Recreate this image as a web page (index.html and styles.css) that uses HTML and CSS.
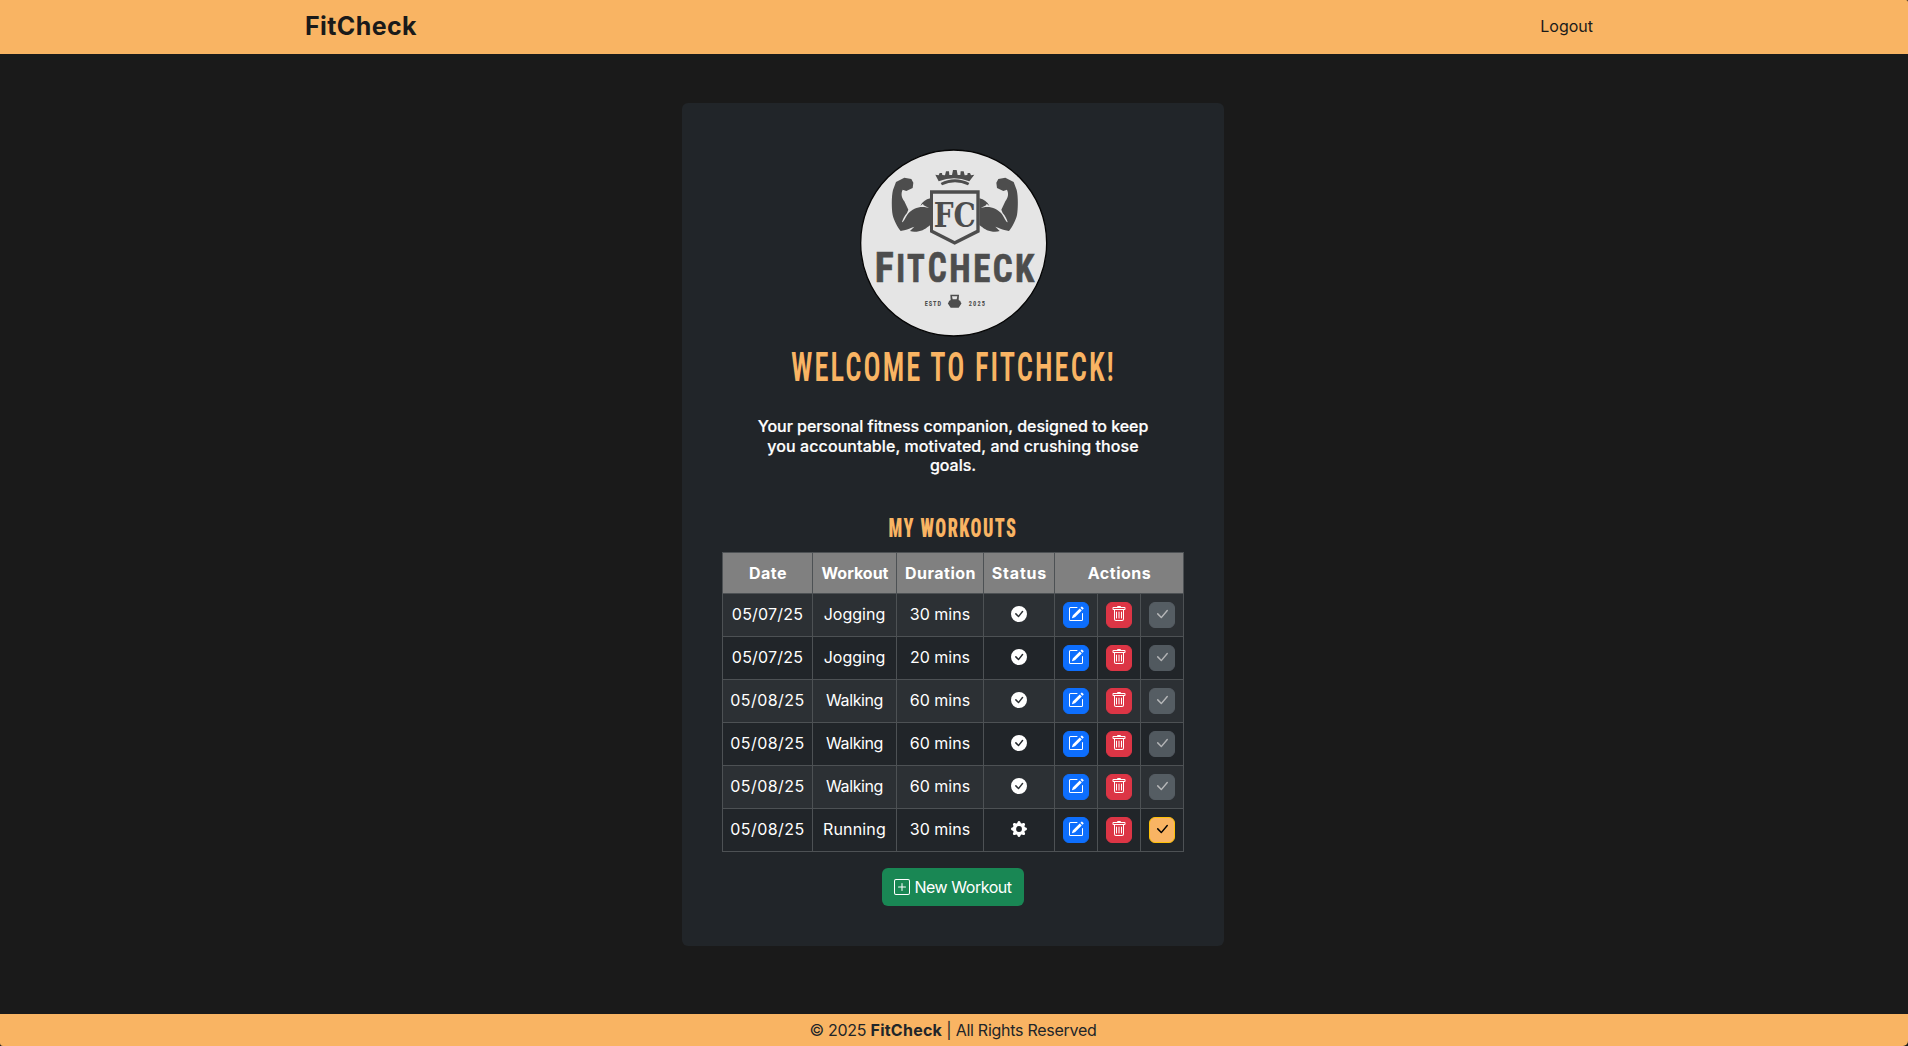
FILE: index.html
```
<!DOCTYPE html>
<html lang="en">
<head>
<meta charset="utf-8">
<title>FitCheck</title>
<link rel="stylesheet" href="styles.css">
</head>
<body>
<svg class="sprite" aria-hidden="true">
  <symbol id="pencil" viewBox="0 0 16 16"><path d="M15.502 1.94a.5.5 0 0 1 0 .706L14.459 3.69l-2-2L13.502.646a.5.5 0 0 1 .707 0l1.293 1.293zm-1.75 2.456-2-2L4.939 9.21a.5.5 0 0 0-.121.196l-.805 2.414a.25.25 0 0 0 .316.316l2.414-.805a.5.5 0 0 0 .196-.12z"/><path fill-rule="evenodd" d="M1 13.5A1.5 1.5 0 0 0 2.5 15h11a1.5 1.5 0 0 0 1.5-1.5v-6a.5.5 0 0 0-1 0v6a.5.5 0 0 1-.5.5h-11a.5.5 0 0 1-.5-.5v-11a.5.5 0 0 1 .5-.5H9a.5.5 0 0 0 0-1H2.5A1.5 1.5 0 0 0 1 2.500z"/></symbol>
  <symbol id="trash" viewBox="0 0 16 16"><path d="M5.5 5.5A.5.5 0 0 1 6 6v6a.5.5 0 0 1-1 0V6a.5.5 0 0 1 .5-.5m2.500 0a.5.5 0 0 1 .5.5v6a.5.5 0 0 1-1 0V6a.5.5 0 0 1 .5-.5m3 .5a.5.5 0 0 0-1 0v6a.5.5 0 0 0 1 0z"/><path d="M14.500 3a1 1 0 0 1-1 1H13v9a2 2 0 0 1-2 2H5a2 2 0 0 1-2-2V4h-.5a1 1 0 0 1-1-1V2a1 1 0 0 1 1-1H6a1 1 0 0 1 1-1h2a1 1 0 0 1 1 1h3.500a1 1 0 0 1 1 1zM4.118 4 4 4.059V13a1 1 0 0 0 1 1h6a1 1 0 0 0 1-1V4.059L11.882 4zM2.500 3h11V2h-11z"/></symbol>
  <symbol id="check" viewBox="0 0 16 16"><path d="M12.736 3.970a.733.733 0 0 1 1.047 0c.286.289.290.756.010 1.050L7.880 12.010a.733.733 0 0 1-1.065.020L3.217 8.384a.757.757 0 0 1 0-1.060.733.733 0 0 1 1.047 0l3.052 3.093 5.400-6.425z"/></symbol>
  <symbol id="done" viewBox="0 0 16 16"><path fill-rule="evenodd" d="M16 8A8 8 0 1 1 0 8a8 8 0 0 1 16 0m-5.030-3.030-3.493 4.447-2.094-2.093a.75.75 0 0 0-1.060 1.060L6.970 11.030a.75.75 0 0 0 1.079-.020l3.992-4.990a.75.75 0 0 0-1.071-1.050"/></symbol>
  <symbol id="gear" viewBox="0 0 16 16"><path d="M9.405 1.050c-.413-1.400-2.397-1.400-2.810 0l-.1.340a1.464 1.464 0 0 1-2.105.872l-.310-.170c-1.283-.698-2.686.705-1.987 1.987l.169.311c.446.820.023 1.841-.872 2.105l-.340.100c-1.400.413-1.400 2.397 0 2.810l.340.100a1.464 1.464 0 0 1 .872 2.105l-.170.310c-.698 1.283.705 2.686 1.987 1.987l.311-.169a1.464 1.464 0 0 1 2.105.872l.100.340c.413 1.400 2.397 1.400 2.810 0l.100-.340a1.464 1.464 0 0 1 2.105-.872l.310.170c1.283.698 2.686-.705 1.987-1.987l-.169-.311a1.464 1.464 0 0 1 .872-2.105l.340-.100c1.400-.413 1.400-2.397 0-2.810l-.340-.100a1.464 1.464 0 0 1-.872-2.105l.170-.310c.698-1.283-.705-2.686-1.987-1.987l-.311.169a1.464 1.464 0 0 1-2.105-.872zM8 10.930a2.929 2.929 0 1 1 0-5.860 2.929 2.929 0 0 1 0 5.858z"/></symbol>
  <symbol id="plus" viewBox="0 0 16 16"><path d="M14 1a1 1 0 0 1 1 1v12a1 1 0 0 1-1 1H2a1 1 0 0 1-1-1V2a1 1 0 0 1 1-1zM2 0a2 2 0 0 0-2 2v12a2 2 0 0 0 2 2h12a2 2 0 0 0 2-2V2a2 2 0 0 0-2-2z"/><path d="M8 4a.5.5 0 0 1 .5.5v3h3a.5.5 0 0 1 0 1h-3v3a.5.5 0 0 1-1 0v-3h-3a.5.5 0 0 1 0-1h3v-3A.5.5 0 0 1 8 4"/></symbol>
</svg>

<header class="navbar">
  <div class="container">
    <a class="brand">FitCheck</a>
    <a class="nav-link">Logout</a>
  </div>
</header>

<main class="main">
  <section class="card">
    <svg class="logo" viewBox="27 28 567 564" role="img" aria-label="FitCheck logo">
      <circle cx="311" cy="310" r="279" fill="#e5e5e5" stroke="#050505" stroke-width="4"/>
      <g fill="#4d4d4d">
        <path d="M256 105l10 2 3-7 7 0 1 6 8 1 3-12 9 0 1 11 8 0 3-15 11 0 3 15 8 0 1-11 9 0 3 12 8-1 1-6 7 0 3 7 10-2-15 20q-46-18-92 0z"/>
        <path d="M272 130q42-22 86 0l-4 7q-39-18-78 0z"/>
        <g id="arm">
          <path d="M138 127l25-13 21 4 6 11-2 16-19 9-11-4c-6 12-3 24 5 35l12 25-4 10c-8 8-13 20-15 28 7-3 11-17 18-26 12-14 31-22 49-20l14 3-16-8c-3-8-4-1-10 1 6-11 16-19 30-22v80c-13 10-22 18-41 20-8 1-15 0-20-2l13-13c-12 3-20 9-27 10l-14 3c-9-11-21-33-24-48-3-17-4-56 1-75z"/>
        </g>
        <use href="#arm" transform="matrix(-1 0 0 1 629 0)"/>
        <path d="M240 152h149v126l-75 37-74-37z"/>
        <path d="M249 162h130v109l-65 33-65-33z" fill="#e5e5e5"/>
        <text class="logo-serif" x="251" y="261" font-size="98" textLength="126" lengthAdjust="spacingAndGlyphs">FC</text>
        <g class="logo-word">
          <text x="74" y="426" font-size="130" textLength="57" lengthAdjust="spacingAndGlyphs">F</text>
          <text class="spaced" x="139" y="426" font-size="114" textLength="92" lengthAdjust="spacingAndGlyphs">IT</text>
          <text x="233" y="426" font-size="130" textLength="57" lengthAdjust="spacingAndGlyphs">C</text>
          <text class="spaced" x="298" y="426" font-size="114" textLength="262" lengthAdjust="spacingAndGlyphs">HECK</text>
        </g>
        <g class="logo-small">
          <text x="224" y="498" textLength="49">ESTD</text>
          <text x="356" y="498" textLength="49">2025</text>
        </g>
        <path fill-rule="evenodd" d="M301 465h26l-1 16q7 2 6 7 5 3 0 7l-6 9h-24l-6-9q-5-4 0-7-1-5 6-7zM306 470l2 9h12l2-9z"/>
      </g>
    </svg>

    <h1 class="title"><svg class="title-art" width="400" height="60"><text x="38" y="44" textLength="325" lengthAdjust="spacingAndGlyphs">WELCOME TO FITCHECK!</text></svg></h1>

    <p class="lead">Your personal fitness companion, designed to keep<br><span class="lead-2">you accountable, motivated, and crushing those</span><br>goals.</p>

    <h2 class="subtitle"><svg class="subtitle-art" width="400" height="40"><text x="135.500" y="24.500" textLength="129" lengthAdjust="spacingAndGlyphs">MY WORKOUTS</text></svg></h2>

    <table class="workouts">
      <colgroup><col class="c-date"><col class="c-workout"><col class="c-duration"><col class="c-status"><col class="c-act"><col class="c-act"><col class="c-act"></colgroup>
      <thead>
        <tr><th>Date</th><th class="tight">Workout</th><th>Duration</th><th class="wide">Status</th><th colspan="3">Actions</th></tr>
      </thead>
      <tbody>
        <tr><td class="d7">05/07/25</td><td>Jogging</td><td>30 mins</td><td class="status"><svg class="icon"><use href="#done"/></svg></td><td><button class="btn edit"><svg class="icon"><use href="#pencil"/></svg></button></td><td><button class="btn del"><svg class="icon"><use href="#trash"/></svg></button></td><td><button class="btn off" disabled><svg class="icon"><use href="#check"/></svg></button></td></tr>
        <tr><td class="d7">05/07/25</td><td>Jogging</td><td>20 mins</td><td class="status"><svg class="icon"><use href="#done"/></svg></td><td><button class="btn edit"><svg class="icon"><use href="#pencil"/></svg></button></td><td><button class="btn del"><svg class="icon"><use href="#trash"/></svg></button></td><td><button class="btn off" disabled><svg class="icon"><use href="#check"/></svg></button></td></tr>
        <tr><td class="d8">05/08/25</td><td class="walk">Walking</td><td>60 mins</td><td class="status"><svg class="icon"><use href="#done"/></svg></td><td><button class="btn edit"><svg class="icon"><use href="#pencil"/></svg></button></td><td><button class="btn del"><svg class="icon"><use href="#trash"/></svg></button></td><td><button class="btn off" disabled><svg class="icon"><use href="#check"/></svg></button></td></tr>
        <tr><td class="d8">05/08/25</td><td class="walk">Walking</td><td>60 mins</td><td class="status"><svg class="icon"><use href="#done"/></svg></td><td><button class="btn edit"><svg class="icon"><use href="#pencil"/></svg></button></td><td><button class="btn del"><svg class="icon"><use href="#trash"/></svg></button></td><td><button class="btn off" disabled><svg class="icon"><use href="#check"/></svg></button></td></tr>
        <tr><td class="d8">05/08/25</td><td class="walk">Walking</td><td>60 mins</td><td class="status"><svg class="icon"><use href="#done"/></svg></td><td><button class="btn edit"><svg class="icon"><use href="#pencil"/></svg></button></td><td><button class="btn del"><svg class="icon"><use href="#trash"/></svg></button></td><td><button class="btn off" disabled><svg class="icon"><use href="#check"/></svg></button></td></tr>
        <tr><td class="d8">05/08/25</td><td class="run">Running</td><td>30 mins</td><td class="status"><svg class="icon"><use href="#gear"/></svg></td><td><button class="btn edit"><svg class="icon"><use href="#pencil"/></svg></button></td><td><button class="btn del"><svg class="icon"><use href="#trash"/></svg></button></td><td><button class="btn mark"><svg class="icon"><use href="#check"/></svg></button></td></tr>
      </tbody>
    </table>

    <button class="new-btn"><svg class="icon"><use href="#plus"/></svg><span>New Workout</span></button>
  </section>
</main>

<footer class="footer"><p class="copy">© 2025 <strong>FitCheck</strong> | All Rights Reserved</p></footer>
</body>
</html>
```
FILE: styles.css
```
* { box-sizing: border-box; }
html { background: #333; }
body {
  margin: 0;
  height: 1046px;
  display: flex;
  flex-direction: column;
  overflow: hidden;
  background: #1a1a1a;
  color: #fff;
  font: 16px/24px Inter, "Liberation Sans", sans-serif;
}
.sprite { display: none; }
.icon { width: 16px; height: 16px; fill: currentColor; display: block; }

.navbar { height: 54px; background: #f9b463; color: #1a1a1a; border-top-right-radius: 2px; }
.container {
  width: 1320px;
  height: 51px;
  margin: 0 auto;
  padding: 0 21px 0 11px;
  display: flex;
  align-items: center;
  justify-content: space-between;
}
.brand { font-size: 25px; font-weight: 700; letter-spacing: .4px; }

.main { flex: 1; display: flex; justify-content: center; align-items: flex-start; padding: 49px 2px 0 0; }
.card {
  width: 542px;
  height: 843px;
  padding-top: 46px;
  border-radius: 6px;
  background: #212529;
  display: flex;
  flex-direction: column;
  align-items: center;
}
.logo { width: 189px; height: 188px; flex: none; }
.logo-serif { font-family: "DejaVu Serif", serif; font-weight: 700; }
.logo-word { font-family: "Roboto Condensed", Roboto, sans-serif; font-weight: 700; stroke: #4d4d4d; stroke-width: 2; }
.logo-word .spaced { letter-spacing: 8px; }
.logo-small { font: 700 19px "Roboto Condensed", Roboto, sans-serif; }

.title, .subtitle { margin: 0; line-height: 0; }
.title-art, .subtitle-art { display: block; overflow: visible; fill: #f9b463; font-family: "Roboto Condensed", Roboto, sans-serif; }
.title-art text { font-size: 41px; font-weight: 600; letter-spacing: 3px; }
.subtitle-art text { font-size: 25px; font-weight: 900; letter-spacing: 2px; }

.lead { margin: 20px 0 0; text-align: center; font-weight: 500; line-height: 19.5px; letter-spacing: -.03px; -webkit-text-stroke: .2px #fff; }
.lead-2 { letter-spacing: .08px; }
.subtitle { margin-top: 36.5px; }

.workouts { width: 462px; flex: none; table-layout: fixed; border-collapse: collapse; text-align: center; }
.c-date { width: 90px; }
.c-workout { width: 84px; }
.c-duration { width: 87px; }
.c-status { width: 71px; }
.c-act { width: 43px; }
.workouts th, .workouts td { padding: 0; border: 1px solid #4d5154; }
.workouts th { height: 41px; padding-left: 1px; background: #808080; font-weight: 700; letter-spacing: .5px; }
.workouts th.tight { letter-spacing: 0; }
.workouts th.wide { letter-spacing: .8px; }
.workouts td { height: 43px; padding-bottom: 2px; }
.workouts td.status { padding-left: 1px; }
.workouts td .icon { margin: 0 auto; }
.workouts tbody tr:nth-child(odd) { background: #2c3034; }
.d7 { letter-spacing: .2px; }
.d8 { letter-spacing: .45px; }
.walk { letter-spacing: -.4px; }
.run { letter-spacing: .15px; }

.btn {
  display: flex;
  align-items: center;
  justify-content: center;
  width: 26px;
  height: 26px;
  margin: 2px auto 0;
  padding: 0 0 2px;
  border: 1px solid;
  border-radius: 6px;
  color: #fff;
}
.edit { background: #0d6efd; border-color: #0d6efd; }
.del { background: #dc3545; border-color: #dc3545; }
.off { background: #6c757d; border-color: #6c757d; opacity: .65; }
.mark { background: #f9b463; border-color: #ffc107; color: #000; }

.new-btn {
  width: 142px;
  height: 38px;
  margin-top: 16px;
  padding: 0;
  display: flex;
  align-items: center;
  justify-content: center;
  gap: 4px;
  border: 0;
  border-radius: 6px;
  background: #198754;
  color: #fff;
  font: inherit;
  letter-spacing: -.47px;
}
.new-btn .icon { margin-bottom: 1px; }

.footer { height: 32px; background: #f9b463; color: #212529; text-align: center; border-radius: 0 0 5px 3px; }
.copy { margin: 0; padding: 4px 2px 0 0; letter-spacing: -.27px; }
.copy strong { letter-spacing: .25px; }
```
